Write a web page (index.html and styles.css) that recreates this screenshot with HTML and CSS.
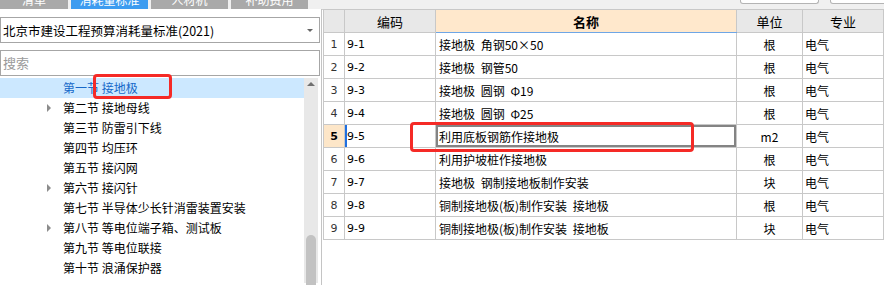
FILE: index.html
```html
<!DOCTYPE html>
<html lang="zh">
<head>
    <meta charset="UTF-8">
    <title>消耗量标准</title>
    <link rel="stylesheet" href="styles.css">
</head>
<body>
    <div class="top">
        <div class="tabs">
            <div class="tab">清单</div>
            <div class="tab active">消耗量标准</div>
            <div class="tab">人材机</div>
            <div class="tab">补助费用</div>
        </div>
        <div class="top-btns">
            <div class="top-btn b1"></div>
            <div class="top-btn b2"></div>
        </div>
    </div>
    <div class="main">
        <div class="left">
            <div class="select">
                <span>北京市建设工程预算消耗量标准(2021)</span>
                <span class="caret"></span>
            </div>
            <div class="search">搜索</div>
            <div class="tree-wrap">
                <ul class="tree">
                    <li class="sel">第一节 接地极</li>
                    <li class="has-kids">第二节 接地母线</li>
                    <li>第三节 防雷引下线</li>
                    <li>第四节 均压环</li>
                    <li>第五节 接闪网</li>
                    <li class="has-kids">第六节 接闪针</li>
                    <li>第七节 半导体少长针消雷装置安装</li>
                    <li class="has-kids">第八节 等电位端子箱、测试板</li>
                    <li>第九节 等电位联接</li>
                    <li>第十节 浪涌保护器</li>
                </ul>
                <div class="vscroll">
                    <span class="up"></span>
                    <span class="thumb"></span>
                </div>
            </div>
        </div>
        <div class="right">
            <table class="grid">
                <colgroup>
                    <col class="c-no"><col class="c-code"><col class="c-name"><col class="c-unit"><col class="c-major">
                </colgroup>
                <thead>
                    <tr><th></th><th>编码</th><th class="h-name">名称</th><th>单位</th><th>专业</th></tr>
                </thead>
                <tbody>
                    <tr><td class="no">1</td><td class="code">9-1</td><td class="name">接地极 角钢50×50</td><td class="unit">根</td><td class="major">电气</td></tr>
                    <tr><td class="no">2</td><td class="code">9-2</td><td class="name">接地极 钢管50</td><td class="unit">根</td><td class="major">电气</td></tr>
                    <tr><td class="no">3</td><td class="code">9-3</td><td class="name">接地极 圆钢 Φ19</td><td class="unit">根</td><td class="major">电气</td></tr>
                    <tr><td class="no">4</td><td class="code">9-4</td><td class="name">接地极 圆钢 Φ25</td><td class="unit">根</td><td class="major">电气</td></tr>
                    <tr class="cur"><td class="no">5</td><td class="code">9-5</td><td class="name">利用底板钢筋作接地极</td><td class="unit">m2</td><td class="major">电气</td></tr>
                    <tr><td class="no">6</td><td class="code">9-6</td><td class="name">利用护坡桩作接地极</td><td class="unit">根</td><td class="major">电气</td></tr>
                    <tr><td class="no">7</td><td class="code">9-7</td><td class="name">接地极 钢制接地板制作安装</td><td class="unit">块</td><td class="major">电气</td></tr>
                    <tr><td class="no">8</td><td class="code">9-8</td><td class="name">铜制接地极(板)制作安装 接地极</td><td class="unit">根</td><td class="major">电气</td></tr>
                    <tr><td class="no">9</td><td class="code">9-9</td><td class="name">铜制接地极(板)制作安装 接地板</td><td class="unit">块</td><td class="major">电气</td></tr>
                </tbody>
            </table>
        </div>
    </div>
    <div class="mark mark-tree"></div>
    <div class="mark mark-row"></div>
</body>
</html>
```

FILE: styles.css
```css
html { overflow: hidden; }
body {
    margin: 0;
    width: 884px;
    height: 285px;
    overflow: hidden;
    position: relative;
    background: #fff;
    font-family: "Noto Sans CJK SC", "Liberation Sans", sans-serif;
    font-size: 12px;
    color: #000;
}
.top {
    height: 9px;
    background: #f0f0f0;
    display: flex;
    justify-content: space-between;
    overflow: hidden;
}
.tabs { display: flex; gap: 3px; }
.tab {
    width: 77px;
    height: 9px;
    background: #a9a9a9;
    color: #fff;
    display: flex;
    justify-content: center;
    align-items: flex-end;
    line-height: 19px;
    overflow: hidden;
}
.tab:first-child { width: 68px; }
.tab.active { background: #3d9cf0; }
.top-btns { display: flex; gap: 11px; align-items: flex-start; }
.top-btn {
    height: 4px;
    margin-top: -1px;
    border: 1px solid #b4b4b4;
    border-top: none;
    border-radius: 0 0 3px 3px;
    background: #fff;
}
.top-btn.b1 { width: 77px; }
.top-btn.b2 { width: 60px; margin-right: -8px; }

.main { display: flex; height: 276px; overflow: hidden; }
.left {
    width: 323px;
    border-right: 1px solid #c4c4c4;
    background: #fff;
}
.select {
    margin-top: 8px;
    width: 316px;
    height: 24px;
    border: 1px solid #a6a6a6;
    display: flex;
    align-items: center;
    justify-content: space-between;
    padding: 0 0 0 2px;
    font-size: 12.5px;
}
.caret {
    width: 0;
    height: 0;
    margin-right: 6px;
    border-left: 3px solid transparent;
    border-right: 3px solid transparent;
    border-top: 3px solid #666;
}
.search {
    margin-top: 7px;
    width: 316px;
    height: 24px;
    border: 1px solid #a6a6a6;
    padding-left: 2px;
    line-height: 24px;
    font-size: 13px;
    color: #9a9a9a;
}
.tree-wrap { display: flex; margin-top: 2px; height: 205px; }
.tree {
    list-style: none;
    margin: 0;
    padding: 0;
    width: 304px;
}
.tree li {
    height: 20px;
    line-height: 20px;
    padding-left: 63px;
    position: relative;
    white-space: nowrap;
}
.tree li.sel { background: #cce8ff; color: #1668c9; }
.tree li.has-kids::before {
    content: "";
    position: absolute;
    left: 47px;
    top: 6px;
    border-top: 4px solid transparent;
    border-bottom: 4px solid transparent;
    border-left: 4px solid #8c8c8c;
}
.vscroll {
    width: 14px;
    background: #e8e8e8;
    position: relative;
}
.vscroll .up {
    position: absolute;
    left: 3px;
    top: 4px;
    border-left: 4px solid transparent;
    border-right: 4px solid transparent;
    border-bottom: 4px solid #707070;
}
.vscroll .thumb {
    position: absolute;
    left: 2px;
    top: 157px;
    width: 10px;
    height: 80px;
    border-radius: 5px;
    background: #c2c2c2;
}

.right {
    flex: 1;
    border-top: 1px solid #cfcfcf;
    padding-left: 1px;
}
.grid {
    border-collapse: collapse;
    table-layout: fixed;
    width: 560px;
    margin-top: -1px;
}
.c-no { width: 21px; }
.c-code { width: 91px; }
.c-name { width: 301px; }
.c-unit { width: 66px; }
.c-major { width: 81px; }
.grid th, .grid td {
    border: 1px solid #c8c8c8;
    height: 22px;
    padding: 0;
    white-space: nowrap;
    overflow: hidden;
}
.grid th {
    background: #e8e8e8;
    font-weight: normal;
    font-size: 13px;
}
.grid th.h-name {
    background: #ffe8cc;
    font-weight: bold;
    border-bottom: 1px solid #6ea6e6;
}
.grid td.no {
    text-align: center;
    color: #333;
    font-family: "DejaVu Sans", sans-serif;
    font-size: 11px;
}
.grid td.code { padding-left: 2px; font-family: "DejaVu Sans", sans-serif; font-size: 11px; }
.grid td.name { padding-left: 3px; word-spacing: 3px; }
.grid td.unit { text-align: center; }
.grid td.major { padding-left: 2px; }
.grid tr.cur td.no { background: #fde6c8; font-weight: bold; color: #000; }
.grid tr.cur td.code { box-shadow: inset 2px 0 0 #1f6fe0; }
.grid tr.cur td.name { box-shadow: inset 0 0 0 2px #848484; }

.mark {
    position: absolute;
    border: 3px solid #f52a26;
    border-radius: 4px;
}
.mark-tree { left: 93px; top: 74px; width: 73px; height: 19px; }
.mark-row { left: 410px; top: 122px; width: 278px; height: 24px; }
```
